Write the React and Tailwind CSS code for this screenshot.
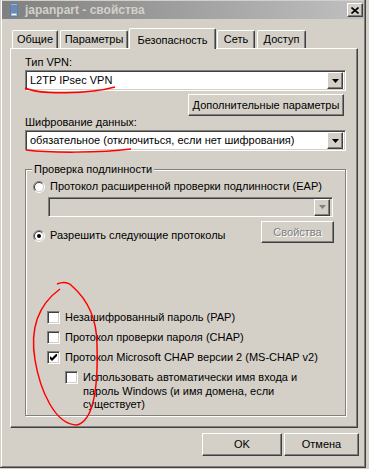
import React from "react";

const FONT = "font-['Liberation_Sans',Arial,sans-serif]";

const RAISED =
  "border border-t-white border-l-white border-r-[#404040] border-b-[#404040] shadow-[inset_-1px_-1px_0_#808080] bg-[#d4d0c8]";
const SUNKEN =
  "border border-t-[#808080] border-l-[#808080] border-r-white border-b-white shadow-[inset_1px_1px_0_#404040,inset_-1px_-1px_0_#d4d0c8]";

// стрелка выпадающего списка
const Arrow = ({ disabled }) => (
  <div className={`w-[16px] h-[17px] flex items-center justify-center ${RAISED}`}>
    <svg width="7" height="4" viewBox="0 0 7 4">
      <path d="M0 0H7L3.5 4Z" fill={disabled ? "#808080" : "#000"} />
    </svg>
  </div>
);

const Combo = ({ value, disabled, className = "" }) => (
  <div
    className={`h-[21px] flex items-center p-[2px] ${SUNKEN} ${
      disabled ? "bg-[#d4d0c8]" : "bg-white"
    } ${className}`}
  >
    <div className="flex-1 pl-[2px] leading-[13px] whitespace-nowrap overflow-hidden">{value}</div>
    <Arrow disabled={disabled} />
  </div>
);

const Button = ({ children, className = "", disabled }) => (
  <div className={`flex items-center justify-center ${RAISED} ${className}`}>
    {disabled ? (
      <span className="text-[#808080] [text-shadow:1px_1px_0_#fff]">{children}</span>
    ) : (
      children
    )}
  </div>
);

const Radio = ({ checked }) => (
  <svg width="12" height="12" viewBox="0 0 12 12" className="shrink-0">
    <circle cx="6" cy="6" r="4.5" fill="#fff" />
    <path d="M9.9 2.1A5.5 5.5 0 0 0 2.1 9.9" stroke="#808080" fill="none" />
    <path d="M9.2 2.8A4.5 4.5 0 0 0 2.8 9.2" stroke="#404040" fill="none" />
    <path d="M9.9 2.1A5.5 5.5 0 0 1 2.1 9.9" stroke="#fff" fill="none" />
    <path d="M9.2 2.8A4.5 4.5 0 0 1 2.8 9.2" stroke="#d4d0c8" fill="none" />
    {checked && <circle cx="6" cy="6" r="2" fill="#000" />}
  </svg>
);

const Check = ({ checked }) => (
  <div className={`w-[13px] h-[13px] shrink-0 bg-white flex items-center justify-center ${SUNKEN}`}>
    {checked && (
      <svg width="7" height="7" viewBox="0 0 7 7">
        <path d="M0 2V5L2 7L7 2V-1L2 4Z" fill="#000" />
      </svg>
    )}
  </div>
);

const TABS = [
  { label: "Общие", w: "w-[46px]", ml: "ml-[10px]" },
  { label: "Параметры", w: "w-[68px]", ml: "ml-[2px]" },
  { label: "Безопасность", w: "w-[87px]", ml: "ml-[1px]", active: true },
  { label: "Сеть", w: "w-[38px]", ml: "ml-[1px]" },
  { label: "Доступ", w: "w-[49px]", ml: "ml-[2px]" },
];

const AUTH = [
  "Незашифрованный пароль (PAP)",
  "Протокол проверки пароля (CHAP)",
  "Протокол Microsoft CHAP версии 2 (MS-CHAP v2)",
];

export default function App() {
  return (
    <div className={`relative w-[369px] h-[469px] bg-[#d4d0c8] overflow-hidden text-[11px] text-black ${FONT}`}>
      <div className="w-[366px] h-[468px] pl-[1px] border-r border-b border-[#404040]">
        <div className="h-full flex flex-col border-l border-l-white border-r border-b border-[#808080]">
          {/* заголовок окна */}
          <div className="mt-[1px] h-[18px] flex items-center pl-[8px] bg-gradient-to-r from-[#808080] to-[#c0c0c0]">
            <svg width="8" height="14" viewBox="0 0 8 14">
              <rect x="0" y="0" width="8" height="14" fill="#5a7fb0" />
              <rect x="1" y="1" width="6" height="12" fill="#9db6d6" />
              <path d="M1 3H7M1 5H7M1 7H7M1 9H7" stroke="#3d5f8c" />
              <rect x="2" y="11" width="4" height="1" fill="#fff" />
            </svg>
            <span className="ml-[7px] text-[12px] font-bold text-[#d4d0c8]">japanpart - свойства</span>
            <div className={`ml-auto mr-[1px] w-[16px] h-[14px] flex items-center justify-center ${RAISED}`}>
              <svg width="8" height="7" viewBox="0 0 8 7">
                <path d="M0.5 0.5L7.5 6.5M7.5 0.5L0.5 6.5" stroke="#000" strokeWidth="1.6" />
              </svg>
            </div>
          </div>

          {/* вкладки */}
          <div className="mt-[9px] h-[20px] flex items-end">
            {TABS.map((t) =>
              t.active ? (
                <div
                  key={t.label}
                  className={`relative z-10 -mb-[1px] h-[21px] ${t.w} ${t.ml} bg-[#d4d0c8] border-t border-l border-t-white border-l-white border-r border-r-[#404040] shadow-[inset_-1px_0_0_#808080] rounded-t-[2px] flex items-start justify-center pt-[3px]`}
                >
                  {t.label}
                </div>
              ) : (
                <div
                  key={t.label}
                  className={`h-[18px] ${t.w} ${t.ml} border-t border-l border-t-white border-l-white border-r border-r-[#404040] shadow-[inset_-1px_0_0_#808080] rounded-t-[2px] flex items-center justify-center`}
                >
                  {t.label}
                </div>
              )
            )}
          </div>

          {/* панель вкладки */}
          <div className="ml-[8px] w-[348px] h-[380px] border border-t-white border-l-white border-r-[#404040] border-b-[#404040] shadow-[inset_-1px_-1px_0_#808080] pl-[14px] pr-[11px] pt-[7px] flex flex-col">
            <div className="leading-[13px]">Тип VPN:</div>
            <Combo className="mt-[1px]" value="L2TP IPsec VPN" />
            <div className="flex justify-end mt-[3px]">
              <Button className="w-[156px] h-[22px] mr-[2px]">Дополнительные параметры</Button>
            </div>
            <div className="leading-[13px]">Шифрование данных:</div>
            <Combo className="mt-[1px]" value="обязательное (отключиться, если нет шифрования)" />

            {/* группа проверки подлинности */}
            <div className="relative mt-[18px] h-[247px] border border-[#808080] shadow-[1px_1px_0_#fff,inset_1px_1px_0_#fff] flex flex-col">
              <div className="absolute -top-[7px] left-[6px] px-[2px] bg-[#d4d0c8] leading-[13px]">
                Проверка подлинности
              </div>
              <div className="mt-[10px] ml-[7px] h-[13px] flex items-center gap-[5px]">
                <Radio />
                <span>Протокол расширенной проверки подлинности (EAP)</span>
              </div>
              <Combo className="mt-[4px] ml-[22px] w-[285px] !h-[20px]" value="" disabled />
              <div className="mt-[4px] flex items-end justify-between">
                <div className="ml-[7px] mb-[1px] h-[13px] flex items-center gap-[5px]">
                  <Radio checked />
                  <span>Разрешить следующие протоколы</span>
                </div>
                <Button className="w-[73px] h-[22px] mr-[11px]" disabled>
                  Свойства
                </Button>
              </div>

              <div className="mt-[68px] ml-[21px] flex flex-col gap-[7px]">
                {AUTH.map((a, i) => (
                  <div key={a} className="h-[13px] flex items-center gap-[5px]">
                    <Check checked={i === 2} />
                    <span>{a}</span>
                  </div>
                ))}
                <div className="ml-[18px] flex items-start gap-[5px]">
                  <Check />
                  <span className="leading-[13.5px] w-[230px]">
                    Использовать автоматически имя входа и пароль Windows (и имя домена, если существует)
                  </span>
                </div>
              </div>
            </div>
          </div>

          {/* кнопки */}
          <div className="mt-[5px] flex">
            <Button className="ml-[200px] w-[80px] h-[23px]">OK</Button>
            <Button className="ml-[2px] w-[75px] h-[23px]">Отмена</Button>
          </div>
        </div>
      </div>

      {/* пометки красным */}
      <svg className="absolute inset-0 pointer-events-none" width="369" height="469" viewBox="0 0 369 469" fill="none">
        <path d="M25 88C40 95 90 94 115 87" stroke="#f00" strokeWidth="1.5" />
        <path d="M26 150C50 153 100 153 131 149" stroke="#f00" strokeWidth="1.5" />
        <path
          d="M57 284C62 282 68 282 72 286C88 300 97 320 97 345C98 380 96 420 77 425C55 425 40 390 35 360C30 330 38 305 60 289"
          stroke="#f00"
          strokeWidth="1.5"
        />
      </svg>
    </div>
  );
}
